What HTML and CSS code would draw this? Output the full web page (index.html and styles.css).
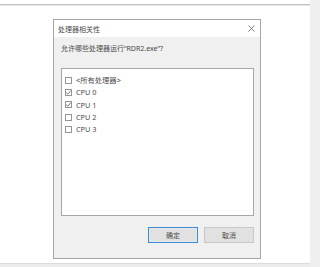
FILE: index.html
```html
<!DOCTYPE html>
<html lang="zh-CN">
<head>
    <meta charset="UTF-8">
    <title>处理器相关性</title>
    <link rel="stylesheet" href="styles.css">
</head>
<body>
    <div class="page">
        <div class="main">
            <div class="topline"></div>
            <div class="stage">
                <div class="dialog">
                    <div class="titlebar">
                        <span class="title">处理器相关性</span>
                        <svg class="close" width="7" height="7" viewBox="0 0 7 7">
                            <path d="M0.5 0.5 L6.5 6.5 M6.5 0.5 L0.5 6.5" stroke="#777" stroke-width="0.9" fill="none"/>
                        </svg>
                    </div>
                    <div class="content">
                        <div class="prompt">允许哪些处理器运行“RDR2.exe”?</div>
                        <ul class="listbox">
                            <li><span class="box"></span>&lt;所有处理器&gt;</li>
                            <li><span class="box"><svg width="7" height="7" viewBox="0 0 7 7"><path d="M1.2 3.6 L2.8 5.2 L5.9 1.6" stroke="#666" stroke-width="0.9" fill="none"/></svg></span>CPU 0</li>
                            <li><span class="box"><svg width="7" height="7" viewBox="0 0 7 7"><path d="M1.2 3.6 L2.8 5.2 L5.9 1.6" stroke="#666" stroke-width="0.9" fill="none"/></svg></span>CPU 1</li>
                            <li><span class="box"></span>CPU 2</li>
                            <li><span class="box"></span>CPU 3</li>
                        </ul>
                        <div class="buttons">
                            <button class="btn primary">确定</button>
                            <button class="btn">取消</button>
                        </div>
                    </div>
                </div>
            </div>
            <div class="bottomband"></div>
        </div>
        <div class="strip"></div>
    </div>
</body>
</html>
```

FILE: styles.css
```css
body {
    margin: 0;
    background: #fff;
    font-family: "Noto Sans", "Noto Sans CJK SC", sans-serif;
    color: #4a4a4a;
}
.page {
    display: flex;
    width: 320px;
    height: 267px;
    overflow: hidden;
}
.main {
    width: 310px;
    display: flex;
    flex-direction: column;
}
.strip {
    width: 10px;
    background: #efefef;
}
.topline {
    height: 1px;
    margin-top: 4px;
    background: #c2c2c2;
    border-bottom: 1px solid #e4e4e4;
}
.stage {
    flex: 1;
    padding: 13px 0 0 53px;
}
.bottomband {
    height: 3px;
    border-top: 1px solid #dcdcdc;
    background: #ececec;
}
.dialog {
    width: 206px;
    height: 238px;
    border: 1px solid #a6a6a6;
    background: #f0f0f0;
    display: flex;
    flex-direction: column;
}
.titlebar {
    height: 17px;
    background: #fff;
    display: flex;
    align-items: center;
    justify-content: space-between;
    padding: 0 5px 0 4px;
    font-size: 7px;
}
.close {
    display: block;
}
.content {
    flex: 1;
    display: flex;
    flex-direction: column;
    padding: 7px 6px 9px 7px;
}
.prompt {
    font-size: 7px;
    line-height: 9px;
}
.listbox {
    list-style: none;
    margin: 15px 0 0 0;
    padding: 5px 0 0 3px;
    height: 141px;
    background: #fff;
    border: 1px solid #a8a8a8;
}
.listbox li {
    display: flex;
    align-items: center;
    gap: 4px;
    height: 12.3px;
    font-size: 7.3px;
}
.box {
    width: 7px;
    height: 7px;
    border: 1px solid #959595;
    box-sizing: border-box;
    background: #fff;
    display: flex;
    align-items: center;
    justify-content: center;
}
.box svg {
    display: block;
    flex: none;
}
.buttons {
    display: flex;
    justify-content: flex-end;
    gap: 6px;
    margin-top: 11px;
}
.btn {
    width: 50px;
    height: 16px;
    padding: 0;
    font-family: "Noto Sans CJK SC", sans-serif;
    font-size: 7px;
    color: #4a4a4a;
    background: #e1e1e1;
    border: 1px solid #c8c8c8;
}
.btn.primary {
    border: 1px solid #3d8ad6;
    box-shadow: inset 0 0 0 1px #e8e8e8;
}
```
